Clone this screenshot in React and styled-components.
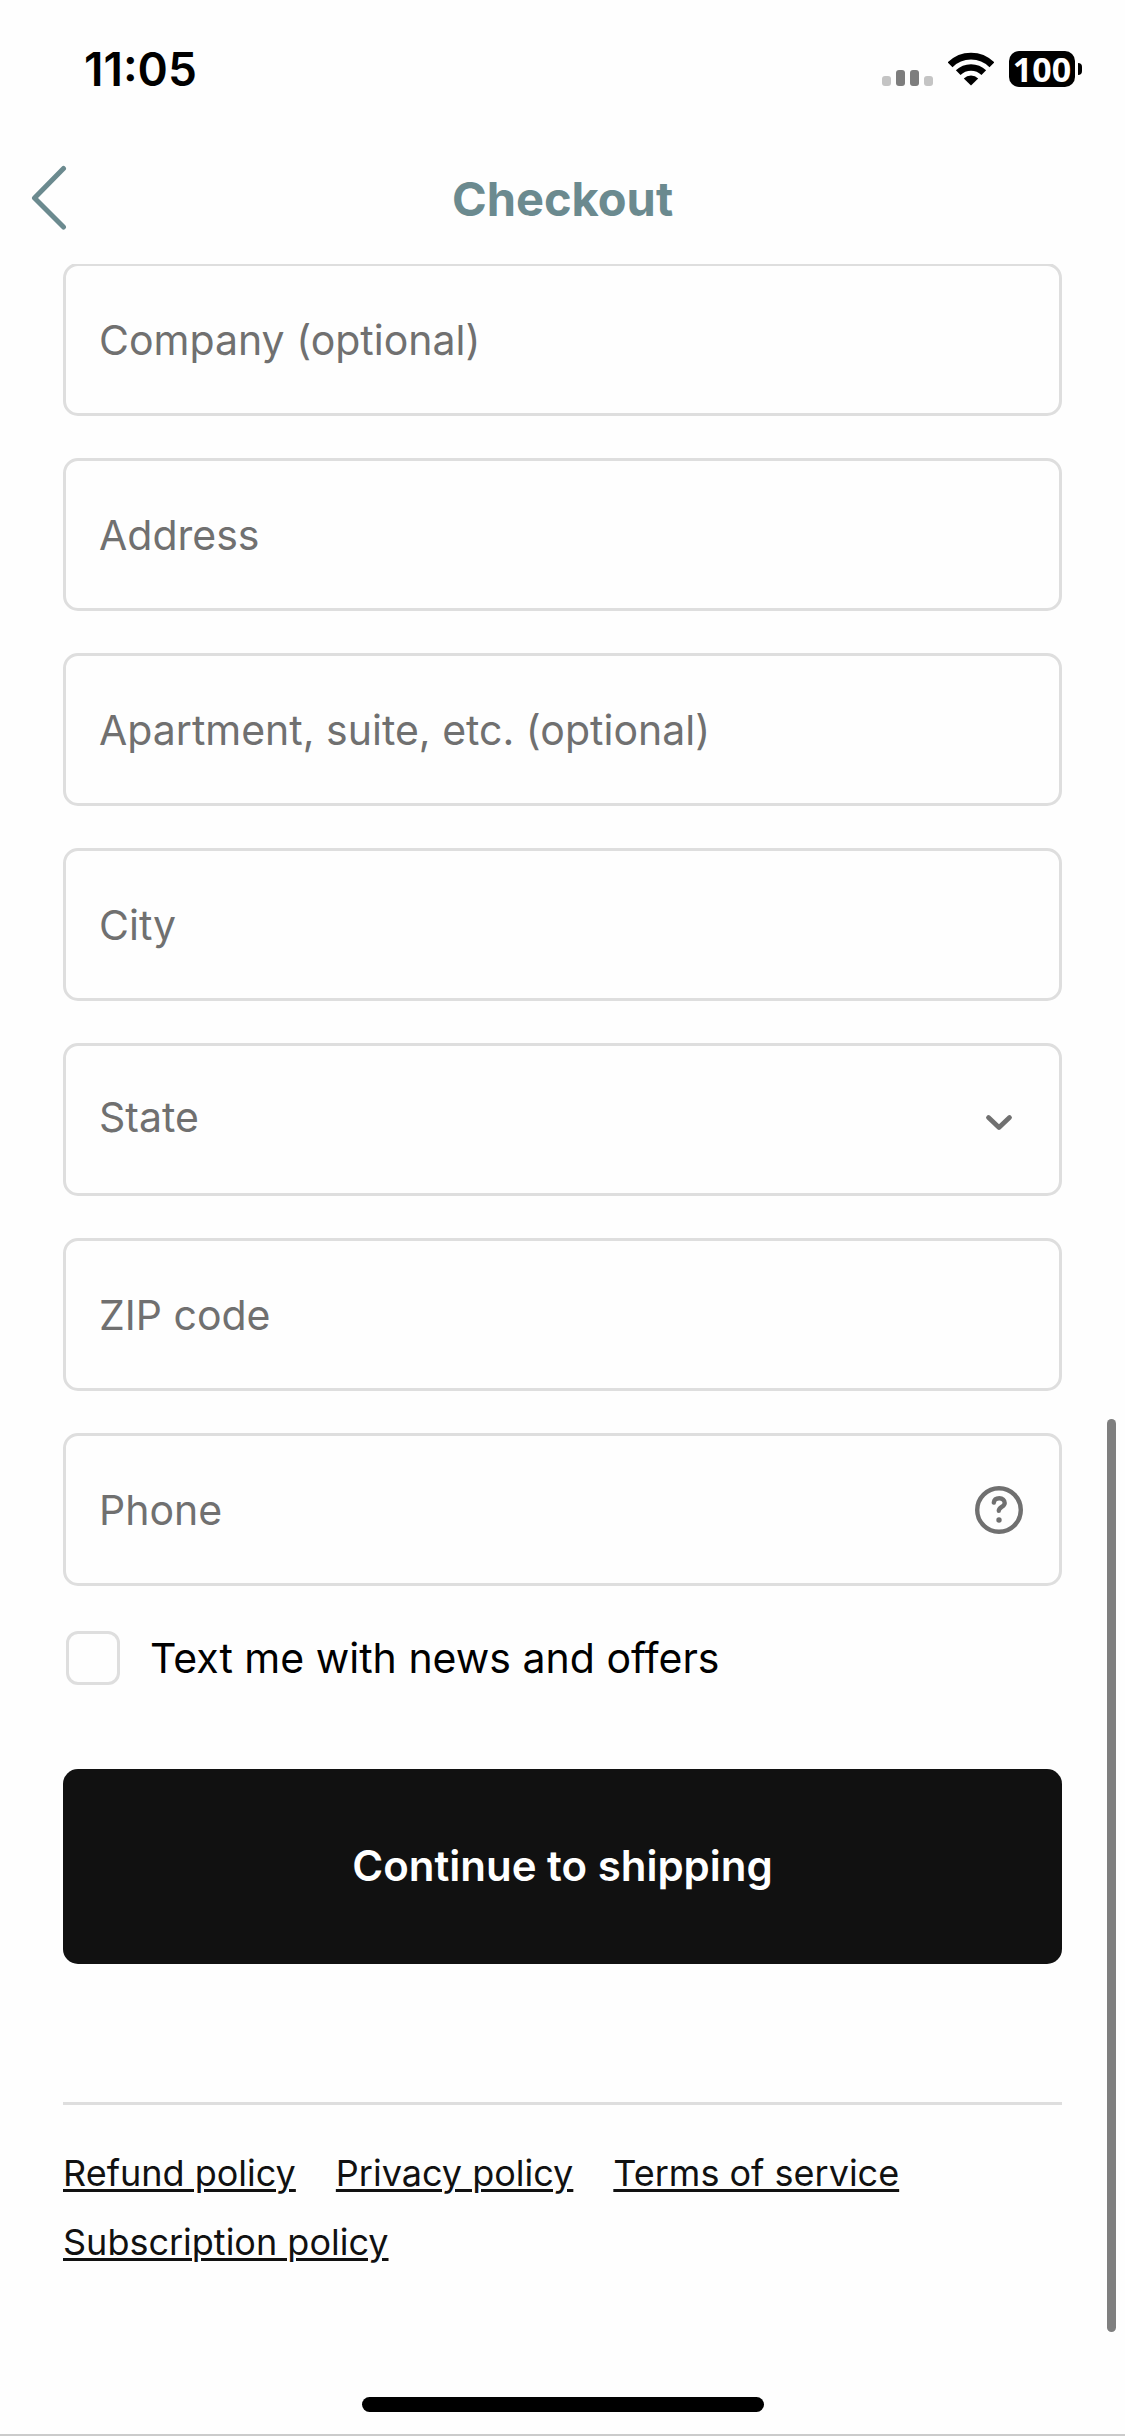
import { useState } from "react";
import styled, { createGlobalStyle } from "styled-components";

const GlobalStyle = createGlobalStyle`
  * {
    box-sizing: border-box;
  }
  body {
    margin: 0;
    background-color: #fefefe;
    font-family: Inter, "Liberation Sans", sans-serif;
  }
`;

const Container = styled.div`
  min-height: 100vh;
  display: flex;
  flex-direction: column;
  border-bottom: 2px solid #cbcbcb;
`;

const Top = styled.header`
  position: sticky;
  top: 0;
  z-index: 1;
  background-color: #fefefe;
`;

const StatusBar = styled.div`
  height: 138px;
  padding: 0 43px 0 84px;
  display: flex;
  align-items: center;
  justify-content: space-between;
`;

const Time = styled.span`
  font-size: 46px;
  font-weight: 600;
  color: black;
`;

const StatusIcons = styled.div`
  display: flex;
  align-items: center;
  gap: 15px;
`;

const Signal = styled.div`
  height: 33px;
  display: flex;
  align-items: flex-end;
  gap: 5px;
`;

const Bar = styled.span`
  width: 9px;
  height: ${(props) => (props.$on ? "16px" : "10px")};
  border-radius: 3px;
  background-color: ${(props) => (props.$on ? "#7d7d7d" : "#c4c4c4")};
`;

const Battery = styled.div`
  display: flex;
  align-items: center;
  gap: 3px;
`;

const Level = styled.span`
  width: 66px;
  height: 36px;
  border-radius: 10px;
  display: flex;
  align-items: center;
  justify-content: center;
  background-color: black;
  color: white;
  font-family: "Noto Sans", sans-serif;
  font-size: 34px;
  font-weight: 700;
  line-height: 36px;
`;

const Nub = styled.span`
  width: 4px;
  height: 12px;
  border-radius: 0 4px 4px 0;
  background-color: black;
`;

const NavBar = styled.nav`
  height: 126px;
  padding: 0 30px 6px;
  display: grid;
  grid-template-columns: 60px 1fr 60px;
  align-items: center;
`;

const BackButton = styled.button`
  border: 0;
  padding: 0;
  height: 66px;
  background: none;
  color: #6b8a8f;
  text-align: left;
  cursor: pointer;
`;

const Title = styled.h1`
  margin: 0;
  font-size: 47px;
  font-weight: 700;
  text-align: center;
  color: #6b8a8f;
`;

const Main = styled.main`
  flex: 1;
  margin-top: -1px;
  padding: 0 63px;
`;

const Form = styled.form`
  display: flex;
  flex-direction: column;
  gap: 42px;
`;

const Field = styled.div`
  height: 153px;
  padding-right: 36px;
  display: flex;
  align-items: center;
  border: 3px solid #dedede;
  border-radius: 15px;
  color: #707070;
`;

const Input = styled.input`
  flex: 1;
  min-width: 0;
  height: 100%;
  border: 0;
  padding: 0 0 0 33px;
  outline: none;
  background: none;
  font-family: inherit;
  font-size: 41px;
  color: black;
  &::placeholder {
    color: #707070;
    opacity: 1;
  }
`;

const Select = styled.select`
  flex: 1;
  height: 100%;
  border: 0;
  padding: 0 0 6px 33px;
  outline: none;
  appearance: none;
  background: none;
  font-family: inherit;
  font-size: 41px;
  color: #707070;
`;

const HelpButton = styled.button`
  border: 0;
  padding: 0;
  width: 48px;
  height: 48px;
  background: none;
  color: #707070;
  cursor: pointer;
  svg {
    display: block;
  }
`;

const CheckRow = styled.div`
  margin-top: 3px;
  padding: 0 3px;
  display: flex;
  align-items: center;
  gap: 30px;
`;

const Checkbox = styled.input`
  appearance: none;
  margin: 0;
  width: 54px;
  height: 54px;
  border: 3px solid #dedede;
  border-radius: 12px;
  &:checked {
    border: 16px solid #111111;
  }
`;

const CheckLabel = styled.label`
  font-size: 41px;
  line-height: 54px;
  color: black;
`;

const Button = styled.button`
  height: 195px;
  margin-top: 42px;
  border: 0;
  padding: 0 0 3px;
  border-radius: 15px;
  background-color: #111111;
  color: white;
  font-family: inherit;
  font-size: 42px;
  font-weight: 600;
  cursor: pointer;
`;

const Footer = styled.footer`
  margin-top: 138px;
  padding-top: 34px;
  border-top: 3px solid #dedede;
  display: flex;
  flex-wrap: wrap;
  column-gap: 40px;
`;

const Link = styled.a`
  font-size: 36px;
  line-height: 69px;
  color: #111111;
  text-decoration: underline;
  text-decoration-thickness: 3px;
  text-underline-offset: 3px;
`;

const ScrollThumb = styled.div`
  position: fixed;
  right: 9px;
  bottom: 104px;
  width: 9px;
  height: 913px;
  border-radius: 5px;
  background-color: #7f7f7f;
`;

const HomeIndicator = styled.div`
  width: 402px;
  height: 15px;
  margin: 0 auto 22px;
  border-radius: 8px;
  background-color: black;
`;

const WifiIcon = () => (
  <svg width="46" height="34" viewBox="0 0 46 34" fill="none" stroke="black">
    <path d="M2.1 12.8A29.5 29.5 0 0 1 43.9 12.8" strokeWidth="6.8" />
    <path d="M10.2 20.7A18.2 18.2 0 0 1 35.8 20.7" strokeWidth="6.6" />
    <path d="M23 33.6L15.8 26.4A10.4 10.4 0 0 1 30.2 26.4Z" fill="black" stroke="none" />
  </svg>
);

const BackIcon = () => (
  <svg width="40" height="66" viewBox="0 0 40 66" fill="none" stroke="currentColor" strokeWidth="5" strokeLinecap="round" strokeLinejoin="round">
    <path d="M33.5 3.5L4.5 33L33.5 62" />
  </svg>
);

const ChevronIcon = () => (
  <svg width="48" height="48" viewBox="0 0 48 48" fill="none" stroke="currentColor" strokeWidth="4.8" strokeLinecap="round" strokeLinejoin="round">
    <path d="M13.5 21.6L24 31.4L34.5 21.6" />
  </svg>
);

const HelpIcon = () => (
  <svg width="48" height="48" viewBox="0 0 48 48" fill="none" stroke="currentColor" strokeWidth="4.4" strokeLinecap="round">
    <circle cx="24" cy="24" r="21.8" />
    <path d="M18.8 16.6C19.2 13.8 21.3 12.3 24.3 12.3C27.600 12.3 29.7 14.2 29.7 17C29.7 21 23.8 20.8 23.8 24.8" />
    <circle cx="24" cy="34" r="2.7" fill="currentColor" stroke="none" />
  </svg>
);

const fields = [
  { name: "company", label: "Company (optional)" },
  { name: "address", label: "Address" },
  { name: "apartment", label: "Apartment, suite, etc. (optional)" },
  { name: "city", label: "City" },
  { name: "state", label: "State", options: ["California", "New York", "Texas"] },
  { name: "zip", label: "ZIP code" },
  { name: "phone", label: "Phone", help: true },
];

const policies = ["Refund policy", "Privacy policy", "Terms of service", "Subscription policy"];

const Checkout = () => {
  const [values, setValues] = useState({});
  const [offers, setOffers] = useState(false);

  const handleChange = (name) => (event) => {
    setValues({ ...values, [name]: event.target.value });
  };

  return (
    <Container>
      <GlobalStyle />
      <Top>
        <StatusBar>
          <Time>11:05</Time>
          <StatusIcons>
            <Signal>
              <Bar />
              <Bar $on />
              <Bar $on />
              <Bar />
            </Signal>
            <WifiIcon />
            <Battery>
              <Level>100</Level>
              <Nub />
            </Battery>
          </StatusIcons>
        </StatusBar>
        <NavBar>
          <BackButton aria-label="Back">
            <BackIcon />
          </BackButton>
          <Title>Checkout</Title>
        </NavBar>
      </Top>
      <Main>
        <Form onSubmit={(event) => event.preventDefault()}>
          {fields.map(({ name, label, options, help }) => (
            <Field key={name}>
              {options ? (
                <>
                  <Select aria-label={label} value={values[name] || ""} onChange={handleChange(name)}>
                    <option value="">{label}</option>
                    {options.map((option) => (
                      <option key={option}>{option}</option>
                    ))}
                  </Select>
                  <ChevronIcon />
                </>
              ) : (
                <Input
                  type={name === "phone" ? "tel" : "text"}
                  aria-label={label}
                  placeholder={label}
                  value={values[name] || ""}
                  onChange={handleChange(name)}
                />
              )}
              {help && (
                <HelpButton type="button" aria-label="Help">
                  <HelpIcon />
                </HelpButton>
              )}
            </Field>
          ))}
          <CheckRow>
            <Checkbox id="offers" type="checkbox" checked={offers} onChange={() => setOffers(!offers)} />
            <CheckLabel htmlFor="offers">Text me with news and offers</CheckLabel>
          </CheckRow>
          <Button type="submit">Continue to shipping</Button>
        </Form>
        <Footer>
          {policies.map((policy) => (
            <Link key={policy} href="#">{policy}</Link>
          ))}
        </Footer>
      </Main>
      <ScrollThumb />
      <HomeIndicator />
    </Container>
  );
};

export default Checkout;
